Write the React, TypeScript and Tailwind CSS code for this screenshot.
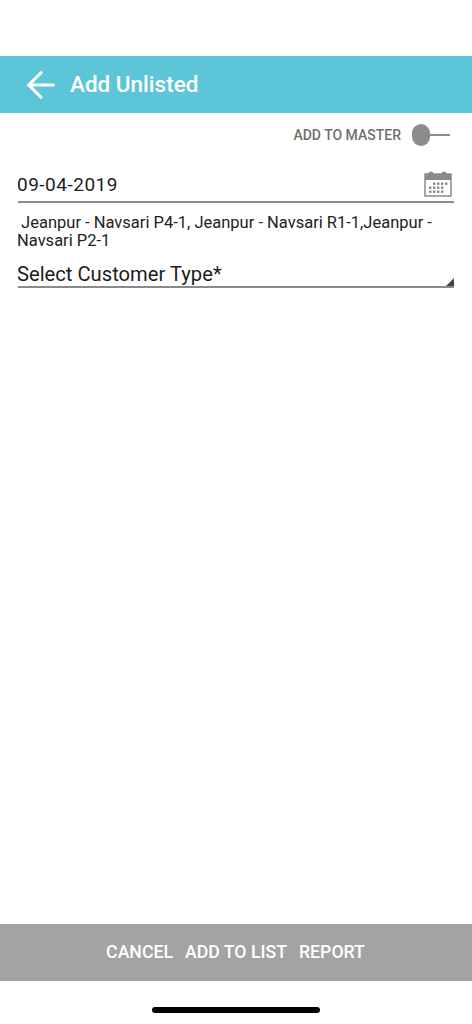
import { ArrowLeft } from 'lucide-react'

function CalendarIcon() {
  const dots = [0, 1, 2, 3]
  return (
    <svg width="28" height="26" viewBox="0 0 28 26" className="mr-[2px] -mt-[2px] text-[#8a8a8a]">
      <rect x="1" y="3" width="26" height="22" fill="none" stroke="currentColor" strokeWidth="1.5" />
      <rect x="1" y="3" width="26" height="6" fill="currentColor" />
      <circle cx="7" cy="3" r="2.4" fill="currentColor" />
      <circle cx="20" cy="3" r="2.4" fill="currentColor" />
      {dots.map((i) => (
        <rect key={`a${i}`} x={9 + i * 4} y="11.5" width="2.4" height="2.4" fill="currentColor" />
      ))}
      {dots.map((i) => (
        <rect key={`b${i}`} x={5 + i * 4} y="15.5" width="2.4" height="2.4" fill="currentColor" />
      ))}
      {dots.map((i) => (
        <rect key={`c${i}`} x={5 + i * 4} y="19.5" width="2.4" height="2.4" fill="currentColor" />
      ))}
    </svg>
  )
}

export default function App() {
  return (
    <div className="flex h-[1024px] w-[472px] flex-col bg-white font-['Roboto',sans-serif]">
      <div className="h-[56px] shrink-0" />

      {/* Header */}
      <header className="flex h-[57px] shrink-0 items-center bg-[#5dc5d8] pl-[20px] text-white">
        <ArrowLeft size={42} strokeWidth={1.8} />
        <h1 className="ml-[8px] text-[22.5px] font-medium">Add Unlisted</h1>
      </header>

      {/* Add to master */}
      <div className="mt-[11px] flex h-[22px] items-center justify-end pr-[22px]">
        <span className="text-[14px] font-medium text-[#6f6f6f]">ADD TO MASTER</span>
        <div className="ml-[11px] flex items-center">
          <div className="h-[22px] w-[18px] rounded-full bg-[#8c8c8c]" />
          <div className="-ml-px h-[2px] w-[21px] bg-[#8c8c8c]" />
        </div>
      </div>

      <main className="flex flex-col px-[18px]">
        {/* Date */}
        <div className="mt-[23px] flex h-[34px] items-center justify-between border-b-2 border-[#8a8a8a]">
          <span className="-ml-px text-[19px] tracking-[0.5px] text-[#1c1c1c]">09-04-2019</span>
          <CalendarIcon />
        </div>

        {/* Routes */}
        <p className="mt-[11px] -ml-px text-[16.5px] leading-[18px] text-[#222]">
          &nbsp;Jeanpur - Navsari P4-1, Jeanpur - Navsari R1-1,Jeanpur - Navsari P2-1
        </p>

        {/* Customer type */}
        <div className="relative mt-[9px] flex h-[29px] items-center border-b-2 border-[#8a8a8a] pt-[3px]">
          <span className="-ml-px text-[20.2px] text-[#1c1c1c]">Select Customer Type*</span>
          <div className="absolute right-0 bottom-0 h-0 w-0 border-b-[8px] border-l-[8px] border-b-[#444] border-l-transparent" />
        </div>
      </main>

      <div className="flex-1" />

      {/* Footer actions */}
      <footer className="flex h-[57px] shrink-0 items-center justify-center gap-[12px] bg-[#a3a3a3] pr-[1px] text-[17.7px] font-medium text-white">
        <span>CANCEL</span>
        <span>ADD TO LIST</span>
        <span>REPORT</span>
      </footer>

      <div className="flex h-[43px] shrink-0 items-start justify-center pt-[26px]">
        <div className="h-[6px] w-[168px] rounded-full bg-black" />
      </div>
    </div>
  )
}
